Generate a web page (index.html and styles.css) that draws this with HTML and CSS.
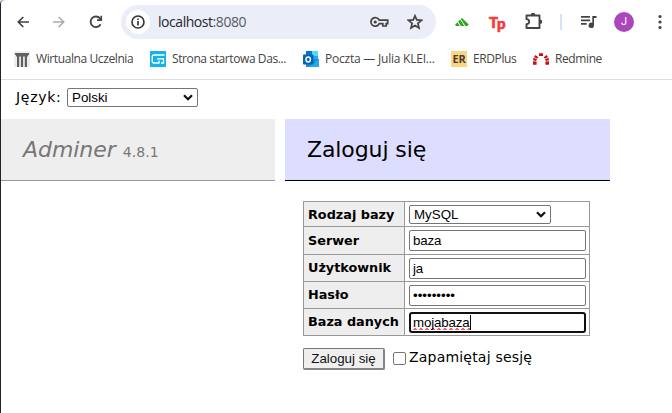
FILE: index.html
```html
<!DOCTYPE html>
<html lang="pl">
<head>
<meta charset="utf-8">
<title>Zaloguj się - Adminer</title>
<link rel="stylesheet" href="styles.css">
</head>
<body>
<div class="window">
  <header class="toolbar">
    <svg class="nav back" width="12" height="12" viewBox="0 0 12 12"><path d="M12 6H1.5M6.3 1L1.3 6l5 5" fill="none" stroke="#444" stroke-width="1.7"/></svg>
    <svg class="nav forward" width="12" height="12" viewBox="0 0 12 12"><path d="M0 6h10.5M5.7 1l5 5-5 5" fill="none" stroke="#aaa" stroke-width="1.6"/></svg>
    <svg class="nav reload" width="14" height="14" viewBox="0 0 14 14"><path d="M11.6 9.3A5.3 5.3 0 1 1 11 3.4l1 1.2" fill="none" stroke="#444" stroke-width="1.8"/><path d="M13.1 .8v5.1H8V4.3h3.4V.8z" fill="#444"/></svg>
    <div class="address">
      <span class="info"><svg width="14" height="14" viewBox="0 0 14 14"><circle cx="7" cy="7" r="6" fill="none" stroke="#333" stroke-width="1.6"/><path d="M6.2 6h1.6v4.4H6.2zM6.2 3.5h1.6v1.6H6.2z" fill="#333"/></svg></span>
      <span class="url">localhost<span class="port">:8080</span></span>
      <svg class="key" width="19" height="12" viewBox="0 0 19 12"><path d="M9.2 4.2H17.7V7.6H16.2V10H12.8V7.6H9.2A4.3 4.3 0 1 1 9.2 4.2Z" fill="none" stroke="#444" stroke-width="1.7"/><circle cx="5.2" cy="6" r="1.6" fill="#444"/></svg>
      <svg class="star" width="16" height="16" viewBox="0 0 16 16"><path d="M8 1.800l1.800 4.100 4.700.4-3.600 3.100 1.100 4.500L8 11.500 4 13.900l1.100-4.500L1.500 6.300l4.700-.4z" fill="none" stroke="#444" stroke-width="1.700"/></svg>
    </div>
    <svg class="ext feather" width="14" height="9" viewBox="0 0 14 9"><path d="M0 6.800L2.600 4.200 4.900 8H1.200zM3.200 3.500L5.200 1.500 9.300 8H6zM5.800 1L7 0l6.800 6.600L12.300 8H10.300z" fill="#31a626"/></svg>
    <span class="ext tp"><span>T</span><span class="low">p</span></span>
    <svg class="ext puzzle" width="18" height="18" viewBox="0 0 18 18"><path d="M1.500 3.500H14.500V16H1.500V12.300Q4.200 11.800 4.200 9.600T1.500 7Z" fill="none" stroke="#444" stroke-width="1.900" stroke-linejoin="round"/><path d="M5.800 3a2.200 2.200 0 0 1 4.400 0zM15 7.500a2.200 2.200 0 0 1 0 4.400z" fill="#444"/></svg>
    <i class="divider"></i>
    <svg class="ext media" width="16" height="14" viewBox="0 0 16 14"><path d="M0 1.800h9M0 5.300h9M0 8.800h5.700" stroke="#444" stroke-width="1.700"/><path d="M11.300 1h4.200v2H13v7.200a2.700 2.700 0 1 1-1.700-2.400z" fill="#444"/></svg>
    <span class="avatar">J</span>
    <svg class="ext more" width="4" height="16" viewBox="0 0 4 16"><g fill="#444"><circle cx="2" cy="2.500" r="1.600"/><circle cx="2" cy="8" r="1.600"/><circle cx="2" cy="13.500" r="1.600"/></g></svg>
  </header>
  <nav class="bookmarks">
    <a class="bm b1"><svg width="16" height="16" viewBox="0 0 16 16"><path d="M0 0h16v16H0z" fill="#eee"/><path d="M1 2h14v2H1zM2 4h12v1.500H2zM3 5h2.200v11H3zM6.900 5h2.200v11H6.900zM10.800 5H13v11h-2.200z" fill="#606060"/></svg><span>Wirtualna Uczelnia</span></a>
    <a class="bm b2"><svg width="16" height="16" viewBox="0 0 16 16"><path d="M0 0h16v16H0z" fill="#16b1e6"/><path d="M14.500 4H4Q2.200 4 2.200 6v4q0 2 1.800 2H9V9.600M7 7.800h6.500V12H11" fill="none" stroke="#fff" stroke-width="1.300"/></svg><span>Strona startowa Das...</span></a>
    <a class="bm b3"><svg width="16" height="16" viewBox="0 0 16 16"><path d="M3 0h12v10H3z" fill="#28a8ea"/><path d="M3 0h6v5H3z" fill="#0078d4"/><path d="M9 0h6v5H9z" fill="#50d9ff"/><path d="M3 8h13v8H3z" fill="#1490df"/><path d="M16 8L6 16h10z" fill="#28a8ea"/><rect y="3.500" width="10.500" height="10" rx=".8" fill="#0364b8"/><ellipse cx="5.200" cy="8.500" rx="2.200" ry="2.500" fill="none" stroke="#fff" stroke-width="1.400"/></svg><span>Poczta — Julia KLEI...</span></a>
    <a class="bm b4"><b class="er">ER</b><span>ERDPlus</span></a>
    <a class="bm b5"><svg width="16" height="12" viewBox="0 0 16 12"><g fill="#c41212"><path d="M0 8.200l3.600.3v3.300H0zM.5 4.800L4 6.200 3.100 8 0 7.200zM2.500 2.100l2.800 2.200L4 5.700 1 3.900zM6 .3h4v2.700H6zM13.500 2.100l-2.800 2.200L12 5.700l3-1.800zM15.500 4.800L12 6.200l.9 1.800 3.100-.8zM16 8.200l-3.600.3v3.300H16z"/></g></svg><span>Redmine</span></a>
  </nav>
  <main>
    <div class="lang"><label>Język:</label><div class="select">Polski<svg width="10" height="7" viewBox="0 0 10 7"><path d="M1 1.200l4 4 4-4" fill="none" stroke="#111" stroke-width="2.200"/></svg></div></div>
    <div class="heads">
      <h1 class="brand"><i>Adminer</i><small>4.8.1</small></h1>
      <h2 class="title">Zaloguj się</h2>
    </div>
    <form class="login">
      <div class="grid">
        <div class="th">Rodzaj bazy</div><div class="td"><div class="select">MySQL<svg width="10" height="7" viewBox="0 0 10 7"><path d="M1 1.200l4 4 4-4" fill="none" stroke="#111" stroke-width="2.200"/></svg></div></div>
        <div class="th tall">Serwer</div><div class="td"><div class="field">baza</div></div>
        <div class="th">Użytkownik</div><div class="td"><div class="field">ja</div></div>
        <div class="th">Hasło</div><div class="td"><div class="field dots">•••••••••</div></div>
        <div class="th">Baza danych</div><div class="td"><div class="field focus"><span class="typo">mojabaza</span><i class="caret"></i></div></div>
      </div>
      <div class="actions"><button type="button">Zaloguj się</button><span class="check"></span><label>Zapamiętaj sesję</label></div>
    </form>
  </main>
</div>
</body>
</html>
```
FILE: styles.css
```css
* { box-sizing: border-box; }
body { margin: 0; background: #d5e2fb; overflow: hidden; }
svg { display: block; flex: none; }
.window { height: 413px; background: #fff; border-left: 1px solid #25222b; border-top-left-radius: 5px 4px; }
.toolbar { height: 44px; display: flex; align-items: center; padding-left: 16px; }
.forward { margin-left: 24px; }
.reload { margin-left: 24px; }
.address { width: 315px; height: 34px; margin-left: 18px; border-radius: 17px; background: #ebeef8; display: flex; align-items: center; padding-left: 5px; }
.info { width: 24px; height: 24px; border-radius: 50%; background: #fff; display: flex; align-items: center; justify-content: center; }
.url { width: 212px; margin-left: 8px; font: 14px/20px "Open Sans", sans-serif; color: #25272b; letter-spacing: -.45px; white-space: nowrap; }
.port { color: #555b66; }
.star { margin-left: 18px; }
.ext { flex: none; }
.feather { margin-left: 19px; margin-top: 1px; }
.tp { width: 16px; margin-left: 20px; font: 900 15px/16px Lato, sans-serif; color: #f23d3d; display: flex; letter-spacing: -1px; -webkit-text-stroke: .6px #f23d3d; }
.low { margin-top: 1px; }
.puzzle { margin-left: 20px; margin-top: -2px; }
.divider { width: 2px; height: 16px; margin-left: 17px; background: #d3e3fd; }
.media { margin-left: 19px; }
.avatar { flex: none; width: 20px; height: 20px; margin-left: 17px; border-radius: 50%; background: #ab47bc; color: #fff; font: 11px/20px Roboto, sans-serif; text-align: center; }
.more { margin-left: 24px; }
.bookmarks { height: 36px; padding: 0 0 5px 13px; border-bottom: 1px solid #dedede; display: flex; align-items: center; font: 12px/16px "Open Sans", sans-serif; color: #444; }
.bm { display: flex; align-items: center; gap: 6px; white-space: nowrap; flex: none; letter-spacing: -.4px; }
.b1 { width: 136px; }
.b2 { width: 153px; }
.b3 { width: 148px; letter-spacing: -.22px; }
.b4 { width: 82px; }
.er { width: 16px; height: 16px; background: #fbd682; color: #4b3b35; font: bold 11px/16px "Open Sans", sans-serif; text-align: center; letter-spacing: -.3px; }
main { font-family: "DejaVu Sans", sans-serif; color: #000; }
.lang { height: 39px; padding: 8px 0 0 15px; display: flex; font-size: 14px; line-height: 19px; }
.lang label { width: 51px; letter-spacing: .7px; }
.select { height: 19px; border: 1px solid #767676; border-radius: 2px; background: #fff; padding: 0 4px; display: flex; align-items: center; justify-content: space-between; font: 13.333px/17px "Liberation Sans", Arial, sans-serif; }
.lang .select { width: 131px; }
.heads { display: flex; gap: 10px; }
h1, h2 { margin: 0; height: 62px; font-weight: normal; line-height: 62px; white-space: nowrap; }
.brand { width: 274px; padding-left: 22px; background: #eee; border-bottom: 1px solid #999; color: #777; font-size: 22px; letter-spacing: -.05px; }
.brand small { font-size: 14px; margin-left: 7px; letter-spacing: .1px; }
.title { width: 325px; padding-left: 22px; background: #ddf; border-bottom: 1px solid #000; font-size: 22px; letter-spacing: -.1px; }
.login { margin: 20px 0 0 302px; }
.grid { width: 287px; display: grid; grid-template-columns: 101px 185px; grid-template-rows: 25px 28px 27px 27px 27px; border-top: 1px solid #999; border-left: 1px solid #999; }
.th, .td { border-right: 1px solid #999; border-bottom: 1px solid #999; }
.th { padding: 1px 0 0 4px; background: #eee; font-weight: bold; font-size: 12.8px; line-height: 24px; white-space: nowrap; }
.tall { padding-top: 2px; }
.td { padding-left: 4px; display: flex; align-items: center; }
.td .select { width: 142px; }
.field { width: 177px; height: 21px; border: 1px solid #767676; border-radius: 2px; padding: 0 3px; font: 13.333px/19px "Liberation Sans", Arial, sans-serif; letter-spacing: -.15px; display: flex; }
.dots { letter-spacing: 0; }
.focus { border: 2px solid #101010; border-radius: 3px; padding: 0 2px; line-height: 17px; }
.typo { height: 17px; background: repeating-linear-gradient(90deg, transparent 0 1px, #ff5964 1px 3px, transparent 3px 6px) 0 14px / 100% 1px no-repeat, repeating-linear-gradient(90deg, #ff5964 0 4px, transparent 4px 6px) 0 15px / 100% 1px no-repeat; }
.caret { width: 1px; height: 15px; margin-top: 1px; background: #000; }
.actions { margin-top: 12px; display: flex; align-items: flex-start; font-size: 14px; line-height: 18px; }
.actions label { letter-spacing: .2px; }
button { width: 82px; height: 22px; border: 1px solid #777; border-right: 2px solid #858585; border-bottom: 2px solid #858585; border-radius: 2px; background: #efefef; padding: 0; font: 13.333px/18px "Liberation Sans", Arial, sans-serif; color: #111; white-space: nowrap; }
.check { width: 13px; height: 13px; margin: 4px 3px 0 8px; border: 1px solid #767676; border-radius: 2px; }
```
